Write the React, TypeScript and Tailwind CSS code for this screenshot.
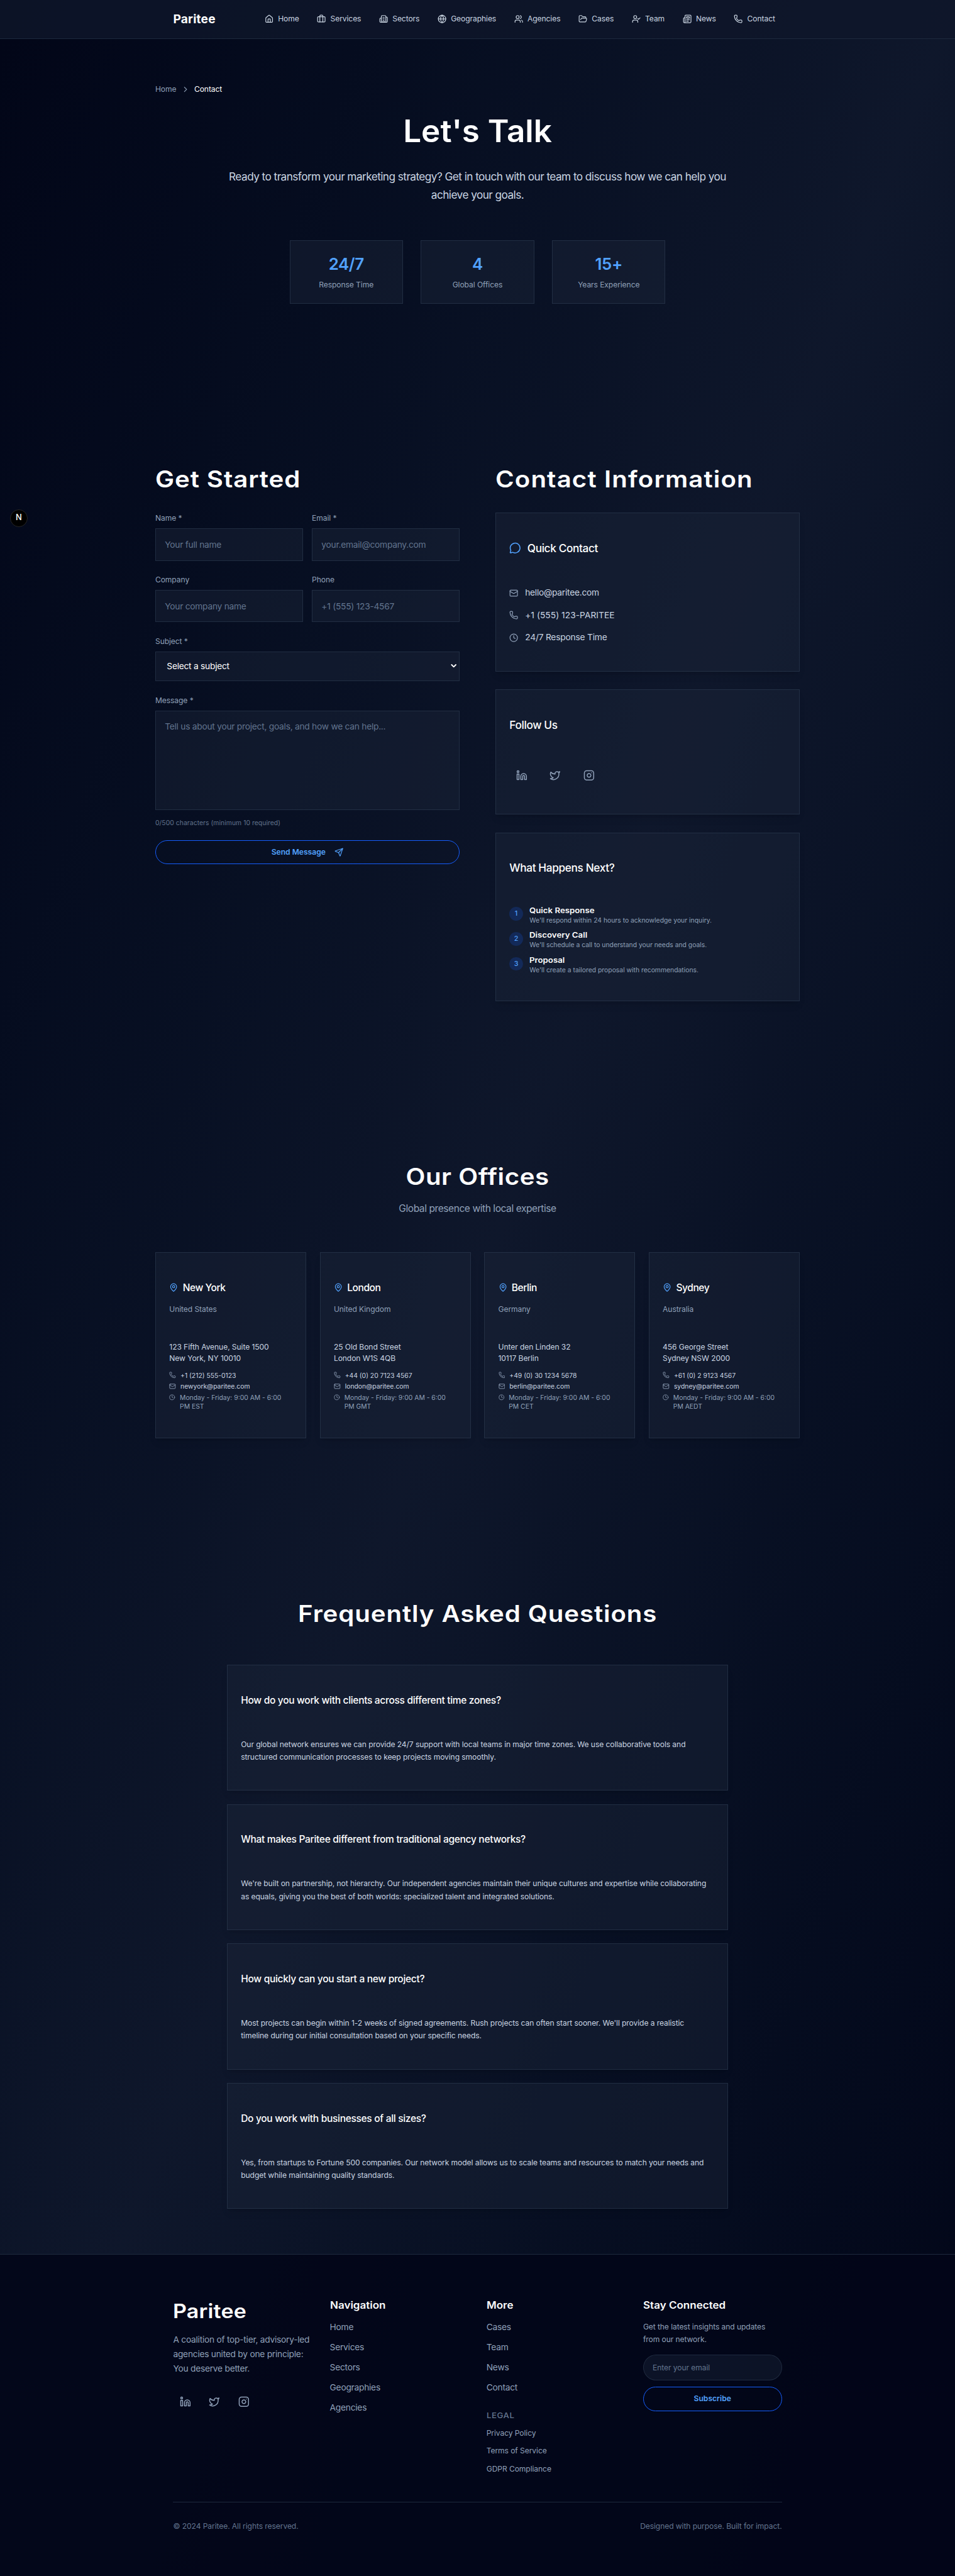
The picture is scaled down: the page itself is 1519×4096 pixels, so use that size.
import type { ReactNode } from "react";
import {
  Briefcase,
  Building2,
  ChevronDown,
  ChevronRight,
  Clock,
  FolderOpen,
  Globe,
  House,
  Instagram,
  Linkedin,
  Mail,
  MapPin,
  MessageCircle,
  Newspaper,
  Phone,
  Send,
  Twitter,
  UserCheck,
  Users,
} from "lucide-react";

const navItems = [
  { label: "Home", icon: House },
  { label: "Services", icon: Briefcase },
  { label: "Sectors", icon: Building2 },
  { label: "Geographies", icon: Globe },
  { label: "Agencies", icon: Users },
  { label: "Cases", icon: FolderOpen },
  { label: "Team", icon: UserCheck },
  { label: "News", icon: Newspaper },
  { label: "Contact", icon: Phone },
];

const stats = [
  { value: "24/7", label: "Response Time" },
  { value: "4", label: "Global Offices" },
  { value: "15+", label: "Years Experience" },
];

const steps = [
  { title: "Quick Response", text: "We'll respond within 24 hours to acknowledge your inquiry." },
  { title: "Discovery Call", text: "We'll schedule a call to understand your needs and goals." },
  { title: "Proposal", text: "We'll create a tailored proposal with recommendations." },
];

const offices = [
  { city: "New York", country: "United States", address: ["123 Fifth Avenue, Suite 1500", "New York, NY 10010"], phone: "+1 (212) 555-0123", email: "newyork@paritee.com", zone: "EST" },
  { city: "London", country: "United Kingdom", address: ["25 Old Bond Street", "London W1S 4QB"], phone: "+44 (0) 20 7123 4567", email: "london@paritee.com", zone: "GMT" },
  { city: "Berlin", country: "Germany", address: ["Unter den Linden 32", "10117 Berlin"], phone: "+49 (0) 30 1234 5678", email: "berlin@paritee.com", zone: "CET" },
  { city: "Sydney", country: "Australia", address: ["456 George Street", "Sydney NSW 2000"], phone: "+61 (0) 2 9123 4567", email: "sydney@paritee.com", zone: "AEDT" },
];

const faqs = [
  {
    q: "How do you work with clients across different time zones?",
    a: ["Our global network ensures we can provide 24/7 support with local teams in major time zones. We use collaborative tools and", "structured communication processes to keep projects moving smoothly."],
  },
  {
    q: "What makes Paritee different from traditional agency networks?",
    a: ["We're built on partnership, not hierarchy. Our independent agencies maintain their unique cultures and expertise while collaborating", "as equals, giving you the best of both worlds: specialized talent and integrated solutions."],
  },
  {
    q: "How quickly can you start a new project?",
    a: ["Most projects can begin within 1-2 weeks of signed agreements. Rush projects can often start sooner. We'll provide a realistic", "timeline during our initial consultation based on your specific needs."],
  },
  {
    q: "Do you work with businesses of all sizes?",
    a: ["Yes, from startups to Fortune 500 companies. Our network model allows us to scale teams and resources to match your needs and", "budget while maintaining quality standards."],
  },
];

const socials = [Linkedin, Twitter, Instagram];

const textSm = "text-[13.6px] tracking-[-0.0076em]";
const textBase = "text-[15.5px] tracking-[-0.019em]";
const textXs = "text-[11.65px]";
const fieldBox =
  "w-full border border-slate-700/50 bg-slate-800/40 px-4 text-[15.5px] tracking-[-0.019em] placeholder:text-slate-500 outline-none rounded-none";

function Card({ className, children }: { className: string; children: ReactNode }) {
  return <div className={`border border-slate-700/50 bg-slate-800/40 shadow-lg ${className}`}>{children}</div>;
}

function Field({ label, children }: { label: string; children: ReactNode }) {
  return (
    <label className="flex flex-col gap-2">
      <span className={`${textSm} leading-5 text-slate-400`}>{label}</span>
      {children}
    </label>
  );
}

function Heading({ className, children }: { className: string; children: ReactNode }) {
  return (
    <h2 className={`scale-x-110 text-[41.1px] font-semibold leading-[53.3px] whitespace-nowrap text-white ${className}`}>
      {children}
    </h2>
  );
}

function SocialRow({ className }: { className: string }) {
  return (
    <div className={`flex ${className}`}>
      {socials.map((Icon, i) => (
        <a key={i} className="flex size-11 items-center justify-center text-slate-400">
          <Icon className="size-5" />
        </a>
      ))}
    </div>
  );
}

function Header() {
  return (
    <header className="h-[69.3px] border-b border-slate-800 bg-slate-900/80">
      <div className="mx-auto flex h-full max-w-6xl items-center justify-between px-8">
        <span className="text-[21.5px] font-bold tracking-[0.01em] text-white">Paritee</span>
        <nav className="flex gap-8 pr-3">
          {navItems.map(({ label, icon: Icon }) => (
            <a key={label} className={`flex items-center gap-2 ${textSm} text-slate-300`}>
              <Icon className="size-4" />
              {label}
            </a>
          ))}
        </nav>
      </div>
    </header>
  );
}

function Hero() {
  return (
    <section className="mx-auto w-[1152px] pt-20">
      <div className={`flex h-5 items-center ${textSm} leading-5`}>
        <span className="text-slate-400">Home</span>
        <ChevronRight className="mx-2 size-4 text-slate-400" />
        <span className="text-white">Contact</span>
      </div>
      <h1 className="mt-[34px] scale-x-105 text-center text-[54.8px] font-semibold leading-16 text-white">Let's Talk</h1>
      <p className="mx-auto mt-[33px] max-w-4xl text-center text-[19.4px] leading-[32.5px] tracking-[-0.033em] text-slate-300">
        Ready to transform your marketing strategy? Get in touch with our team to discuss how we can help you
        <br />
        achieve your goals.
      </p>
      <div className="mx-auto mt-16 grid max-w-2xl grid-cols-3 gap-8">
        {stats.map((s) => (
          <Card key={s.label} className="flex h-[113.8px] flex-col items-center p-6 shadow-none">
            <div className="text-[29.1px] font-semibold leading-9 tracking-[-0.015em] text-blue-400">{s.value}</div>
            <div className={`mt-[9px] ${textSm} leading-5 text-slate-400`}>{s.label}</div>
          </Card>
        ))}
      </div>
    </section>
  );
}

function ContactForm() {
  return (
    <div>
      <Heading className="origin-left tracking-[0.0226em]">Get Started</Heading>
      <form className="mt-8 flex flex-col gap-6">
        <div className="grid grid-cols-2 gap-4">
          <Field label="Name *">
            <input className={`${fieldBox} h-[57.8px]`} placeholder="Your full name" />
          </Field>
          <Field label="Email *">
            <input className={`${fieldBox} h-[57.8px]`} placeholder="your.email@company.com" />
          </Field>
        </div>
        <div className="grid grid-cols-2 gap-4">
          <Field label="Company">
            <input className={`${fieldBox} h-[57.8px]`} placeholder="Your company name" />
          </Field>
          <Field label="Phone">
            <input className={`${fieldBox} h-[57.8px]`} placeholder="+1 (555) 123-4567" />
          </Field>
        </div>
        <Field label="Subject *">
          <span className="relative block">
            <select className={`${fieldBox} block h-[53.8px] appearance-none pl-[19.5px] text-white`}>
              <option>Select a subject</option>
            </select>
            <ChevronDown className="absolute top-[19px] right-[3px] size-[15px] text-white" strokeWidth={3.4} />
          </span>
        </Field>
        <div>
          <Field label="Message *">
            <textarea
              className={`${fieldBox} block h-[177.5px] resize-none py-4 leading-6`}
              placeholder="Tell us about your project, goals, and how we can help..."
            />
          </Field>
          <p className={`mt-[14.5px] ${textXs} leading-4 tracking-[0.005em] text-slate-500`}>0/500 characters (minimum 10 required)</p>
        </div>
        <button
          type="button"
          className="flex h-[42.8px] items-center justify-center gap-4 rounded-full border border-blue-600 text-[13.6px] font-semibold text-blue-400"
        >
          Send Message
          <Send className="size-4" />
        </button>
      </form>
    </div>
  );
}

function ContactInfo() {
  const rows = [
    { icon: Mail, text: "hello@paritee.com", spacing: "tracking-[-0.019em]" },
    { icon: Phone, text: "+1 (555) 123-PARITEE", spacing: "tracking-[0.002em]" },
    { icon: Clock, text: "24/7 Response Time", spacing: "tracking-[-0.015em]" },
  ];
  const title = "flex h-7 items-center text-[19.4px] font-medium tracking-[-0.022em] text-white";
  return (
    <div>
      <Heading className="origin-left tracking-[0.028em]">Contact Information</Heading>
      <div className="mt-8 flex flex-col gap-8">
        <Card className="h-[283.8px] px-6 pt-12">
          <h3 className={`${title} gap-[11px]`}>
            <MessageCircle className="size-[21px] text-blue-400" />
            Quick Contact
          </h3>
          <div className="mt-[54px] flex flex-col gap-4">
            {rows.map(({ icon: Icon, text, spacing }) => (
              <div key={text} className={`flex h-6 items-center gap-3 text-[15.5px] text-slate-300 ${spacing}`}>
                <Icon className="size-4 text-slate-400" />
                {text}
              </div>
            ))}
          </div>
        </Card>
        <Card className="h-[223.8px] px-6 pt-12">
          <h3 className={title}>Follow Us</h3>
          <SocialRow className="mt-[54px] gap-4" />
        </Card>
        <Card className="h-[301.4px] px-6 pt-12">
          <h3 className={title}>What Happens Next?</h3>
          <div className="mt-[54px] flex flex-col gap-3">
            {steps.map((s, i) => (
              <div key={s.title} className="flex h-[32.8px] items-start gap-3">
                <span className="mt-0.5 flex size-6 shrink-0 items-center justify-center rounded-full bg-blue-600/20 text-[12px] font-medium text-blue-400">
                  {i + 1}
                </span>
                <div>
                  <h4 className="origin-left scale-x-[1.08] text-[13.8px] font-semibold leading-[16.8px] text-white">{s.title}</h4>
                  <p className={`${textXs} leading-4 text-slate-400`}>{s.text}</p>
                </div>
              </div>
            ))}
          </div>
        </Card>
      </div>
    </div>
  );
}

function Offices() {
  return (
    <section className="mx-auto mt-[287.1px] w-[1152px]">
      <Heading className="text-center tracking-[0.0134em]">Our Offices</Heading>
      <p className="mt-[17px] text-center text-[17.46px] leading-7 tracking-[-0.0274em] text-slate-400">Global presence with local expertise</p>
      <div className="mt-[63px] grid grid-cols-4 gap-6">
        {offices.map((o) => (
          <Card key={o.city} className="h-[332.6px] px-6 pt-12">
            <h3 className="flex h-7 items-center gap-2 text-[17.46px] font-medium tracking-[-0.028em] text-white">
              <MapPin className="size-4 text-blue-400" />
              {o.city}
            </h3>
            <p className={`mt-[14.8px] ${textSm} leading-5 text-slate-400`}>{o.country}</p>
            <p className={`mt-12 ${textSm} leading-5 text-slate-300`}>
              {o.address[0]}
              <br />
              {o.address[1]}
            </p>
            <div className={`mt-3 flex flex-col gap-1 ${textXs} leading-4 text-slate-300`}>
              <div className="flex items-center gap-2">
                <Phone className="size-3 text-slate-400" />
                {o.phone}
              </div>
              <div className="flex items-center gap-2">
                <Mail className="size-3 text-slate-400" />
                {o.email}
              </div>
              <div className="flex items-start gap-2 text-slate-400">
                <Clock className="mt-0.5 size-[10.8px] shrink-0" />
                <span className="whitespace-nowrap">
                  Monday - Friday: 9:00 AM - 6:00
                  <br />
                  PM {o.zone}
                </span>
              </div>
            </div>
          </Card>
        ))}
      </div>
    </section>
  );
}

function Faq() {
  return (
    <section className="mx-auto mt-[287.5px] max-w-4xl pb-20">
      <Heading className="text-center tracking-[0.022em]">Frequently Asked Questions</Heading>
      <div className="mt-16 flex flex-col gap-6">
        {faqs.map((f) => (
          <Card key={f.q} className="h-[225.1px] px-6 pt-12">
            <h3 className="flex h-7 items-center text-[17.46px] font-medium tracking-[-0.02em] text-white">{f.q}</h3>
            <p className={`mt-[54px] whitespace-nowrap ${textSm} leading-[22.75px] text-slate-300`}>
              {f.a[0]}
              <br />
              {f.a[1]}
            </p>
          </Card>
        ))}
      </div>
    </section>
  );
}

function Footer() {
  const columnTitle = "origin-left scale-x-110 text-[17.4px] font-semibold leading-[21.6px] text-white whitespace-nowrap";
  const links = `mt-[17px] flex flex-col gap-3 ${textBase} leading-6 text-slate-400`;
  return (
    <footer className="h-[576px] border-t border-slate-800 bg-slate-950/90 pt-20">
      <div className="mx-auto w-[1088px]">
        <div className="grid h-[362.6px] grid-cols-4 gap-8">
          <div>
            <div className="origin-left scale-x-110 text-[34.7px] font-semibold leading-[42.7px] tracking-[0.006em] text-white">Paritee</div>
            <p className={`mt-[17px] whitespace-nowrap ${textBase} leading-[26px] text-slate-400`}>
              A coalition of top-tier, advisory-led
              <br />
              agencies united by one principle:
              <br />
              You deserve better.
            </p>
            <SocialRow className="mt-6 gap-2" />
          </div>
          <div>
            <h3 className={columnTitle}>Navigation</h3>
            <div className={links}>
              <a>Home</a>
              <a>Services</a>
              <a>Sectors</a>
              <a>Geographies</a>
              <a>Agencies</a>
            </div>
          </div>
          <div>
            <h3 className={columnTitle}>More</h3>
            <div className={links}>
              <a>Cases</a>
              <a>Team</a>
              <a>News</a>
              <a>Contact</a>
            </div>
            <h4 className="mt-[30px] origin-left scale-x-110 text-[13.5px] font-medium leading-[16.8px] tracking-[0.04em] text-slate-500">LEGAL</h4>
            <div className={`mt-[10px] flex flex-col gap-2 ${textSm} leading-6 text-slate-400`}>
              <a>Privacy Policy</a>
              <a>Terms of Service</a>
              <a>GDPR Compliance</a>
            </div>
          </div>
          <div>
            <h3 className={columnTitle}>Stay Connected</h3>
            <p className={`mt-[16.5px] ${textSm} leading-[22.75px] text-slate-400`}>
              Get the latest insights and updates
              <br />
              from our network.
            </p>
            <input
              className="mt-4 h-[45.4px] w-full rounded-full border border-slate-700/50 bg-slate-900/80 px-4 text-[13.6px] tracking-[-0.0076em] outline-none placeholder:text-slate-500"
              placeholder="Enter your email"
            />
            <button type="button" className="mt-3 flex h-[43px] w-full items-center justify-center rounded-full border border-blue-600 text-[13.6px] font-semibold text-blue-400">
              Subscribe
            </button>
          </div>
        </div>
        <div className={`flex justify-between border-t border-slate-800 pt-8 ${textSm} leading-5 text-slate-500`}>
          <span>© 2024 Paritee. All rights reserved.</span>
          <span>Designed with purpose. Built for impact.</span>
        </div>
      </div>
    </footer>
  );
}

export default function App() {
  return (
    <div className="relative h-[4604px] overflow-hidden bg-linear-to-br from-slate-950 via-slate-900 to-slate-950 font-['Inter',sans-serif] [zoom:0.8898]">
      <Header />
      <Hero />
      <section className="mx-auto mt-72 grid w-[1152px] grid-cols-2 gap-16">
        <ContactForm />
        <ContactInfo />
      </section>
      <Offices />
      <Faq />
      <Footer />
      <div className="absolute top-[910px] left-[17.5px] flex size-8 items-center justify-center rounded-full border border-neutral-800 bg-black">
        <span className="text-[14.5px] font-medium leading-none text-white">N</span>
      </div>
    </div>
  );
}
